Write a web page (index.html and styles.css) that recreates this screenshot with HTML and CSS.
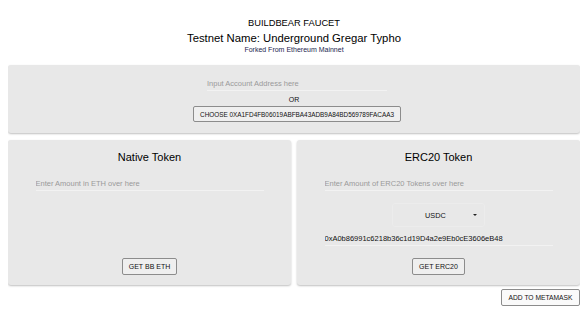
FILE: index.html
```html
<!DOCTYPE html>
<html lang="en">
<head>
    <meta charset="UTF-8">
    <meta name="viewport" content="width=device-width, initial-scale=1.0">
    <title>BuildBear Faucet</title>
    <link rel="stylesheet" href="styles.css">
</head>
<body>

    <header class="header">
        <div class="brand">BUILDBEAR FAUCET</div>
        <div class="testnet">Testnet Name: Underground Gregar Typho</div>
        <div class="forked">Forked From Ethereum Mainnet</div>
    </header>

    <section class="panel account">
        <div class="field account-field">
            <input type="text" placeholder="Input Account Address here">
        </div>
        <div class="or">OR</div>
        <button class="btn choose">CHOOSE 0XA1FD4FB06019ABFBA43ADB9A84BD569789FACAA3</button>
    </section>

    <div class="tokens">
        <section class="panel token">
            <h2>Native Token</h2>
            <div class="field">
                <input type="text" placeholder="Enter Amount in ETH over here">
            </div>
            <button class="btn native-btn">GET BB ETH</button>
        </section>

        <section class="panel token">
            <h2>ERC20 Token</h2>
            <div class="field">
                <input type="text" placeholder="Enter Amount of ERC20 Tokens over here">
            </div>
            <div class="select">
                <span>USDC</span>
                <span class="arrow"></span>
            </div>
            <div class="field address">
                <input type="text" value="0xA0b86991c6218b36c1d19D4a2e9Eb0cE3606eB48">
            </div>
            <button class="btn erc-btn">GET ERC20</button>
        </section>
    </div>

    <div class="footer">
        <button class="btn metamask">ADD TO METAMASK</button>
    </div>

</body>
</html>
```

FILE: styles.css
```css
body {
    margin: 8px;
    background: #ffffff;
    font-family: "Liberation Sans", Arial, sans-serif;
    color: #000;
}
.header {
    padding-top: 8px;
    margin-bottom: 11px;
    text-align: center;
}
.brand {
    font-size: 9.3px;
    line-height: 14px;
}
.testnet {
    font-size: 11.3px;
    line-height: 16px;
}
.forked {
    font-size: 7px;
    line-height: 8px;
    color: #1c2650;
}
.panel {
    background: #e8e8e8;
    border-radius: 3px;
    box-shadow: 0 1px 2px rgba(0, 0, 0, 0.25);
}
.account {
    display: flex;
    flex-direction: column;
    align-items: center;
    padding: 11px 0;
}
.field {
    width: 228px;
    border-bottom: 1px solid #f2f2f2;
}
.account-field {
    width: 180px;
    margin-left: 6px;
}
.field input {
    display: block;
    width: 100%;
    height: 14px;
    padding: 0;
    border: none;
    outline: none;
    background: transparent;
    font-family: "Liberation Sans", Arial, sans-serif;
    font-size: 7.5px;
    color: #111;
}
.field input::placeholder {
    color: #9a9a9a;
}
.or {
    margin-top: 4px;
    font-size: 7px;
    line-height: 10px;
    color: #111;
}
.btn {
    height: 17px;
    padding: 0 6px;
    background: #efefef;
    border: 1px solid #8c8c8c;
    border-radius: 2px;
    font-family: "Liberation Sans", Arial, sans-serif;
    font-size: 7px;
    color: #111;
}
.choose {
    margin-top: 1px;
    height: 16px;
    width: 208px;
    margin-left: 6px;
    padding: 0;
    font-size: 6.4px;
}
.tokens {
    display: grid;
    grid-template-columns: 1fr 1fr;
    gap: 6px;
    margin-top: 7px;
}
.token {
    display: flex;
    flex-direction: column;
    align-items: center;
    padding: 8px 0 10px;
}
.token h2 {
    margin: 0 0 10px;
    font-size: 11px;
    font-weight: normal;
    line-height: 18px;
}
.select {
    display: flex;
    justify-content: space-between;
    align-items: center;
    box-sizing: border-box;
    width: 93px;
    height: 24px;
    margin-top: 12px;
    padding: 0 7px 0 32px;
    border: 1px solid #ececec;
    border-radius: 3px;
    font-size: 7.3px;
    color: #111;
}
.arrow {
    width: 0;
    height: 0;
    border-left: 2.5px solid transparent;
    border-right: 2.5px solid transparent;
    border-top: 2.5px solid #222;
}
.address {
    margin-top: 4px;
}
.native-btn {
    margin-top: auto;
}
.erc-btn {
    margin-top: 12px;
}
.footer {
    display: flex;
    justify-content: flex-end;
    margin-top: 4px;
}
.metamask {
    background: #fafafa;
    width: 79px;
    padding: 0;
    font-size: 6.7px;
}
```
